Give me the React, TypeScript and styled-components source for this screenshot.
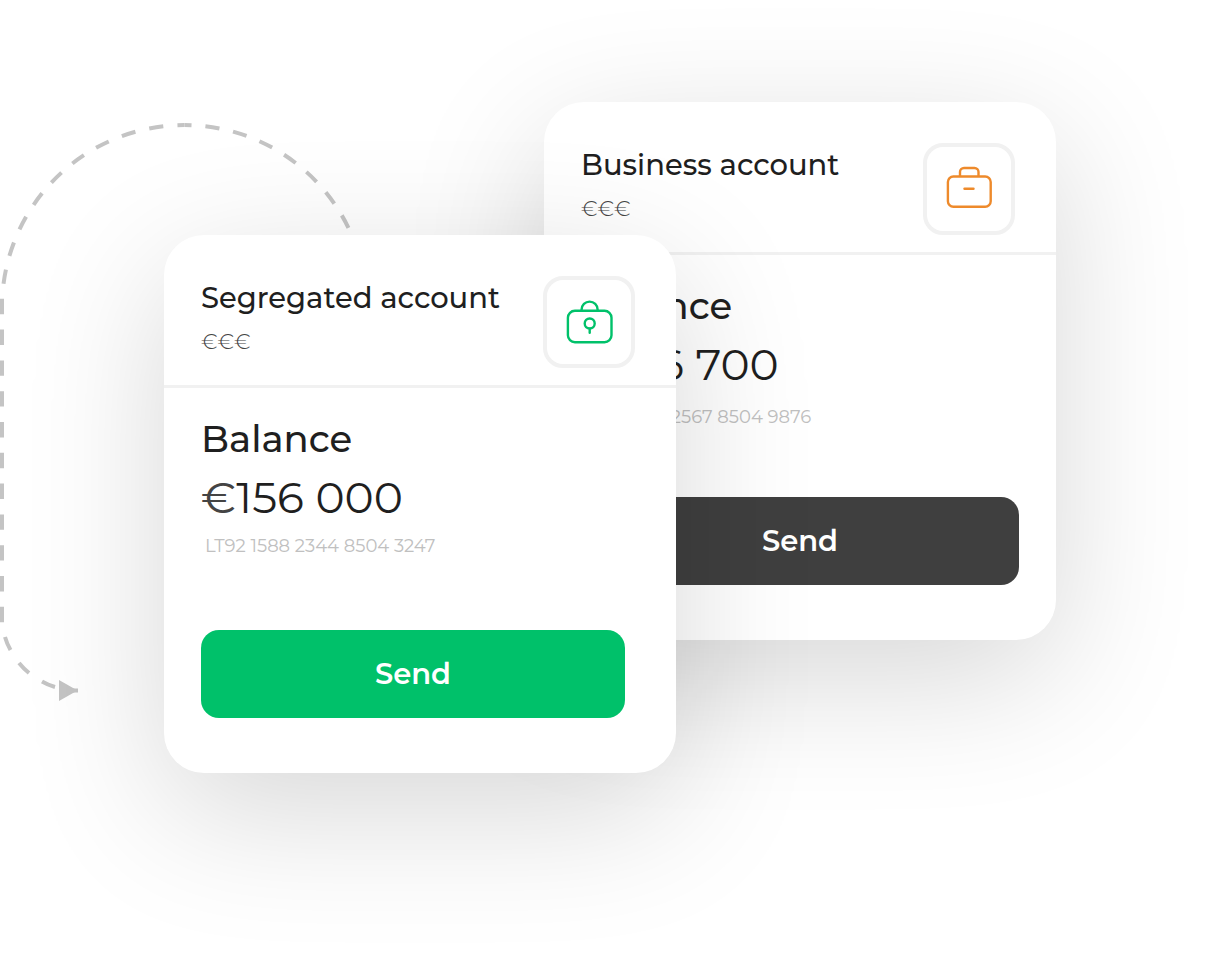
import React from "react";
import styled, { createGlobalStyle } from "styled-components";

const GlobalStyle = createGlobalStyle`
  *, *::before, *::after { box-sizing: border-box; }
  body {
    margin: 0;
    background: #ffffff;
    font-family: Montserrat, Inter, sans-serif;
    color: #1f1f1f;
  }
  h2, h3, p { margin: 0; }
`;

const Scene = styled.main`
  position: relative;
  min-height: 100vh;
  overflow: hidden;
  padding: 102px 154px 205px 164px;
`;

const Trail = styled.svg`
  position: absolute;
  left: 0;
  top: 0;
  fill: none;
  stroke: #c4c4c4;
  stroke-width: 4;
`;

const Stack = styled.div`
  position: relative;
  display: grid;
  grid-template-columns: 380fr 132fr 380fr;
  grid-template-rows: 133px 405px 133px;
`;

const Card = styled.section<{ $front?: boolean }>`
  grid-column: ${(p) => (p.$front ? "1 / 3" : "2 / 4")};
  grid-row: ${(p) => (p.$front ? "2 / 4" : "1 / 3")};
  z-index: ${(p) => (p.$front ? 1 : 0)};
  min-width: 0;
  border-radius: 40px;
  background: #ffffff;
  box-shadow: 0 38px 140px rgba(0, 0, 0, 0.16);
`;

const CardHeader = styled.header`
  display: flex;
  justify-content: space-between;
  padding: 41px 41px 17px 37px;
  border-bottom: 3px solid #f1f1f1;
`;

const Title = styled.h2`
  font-size: 29px;
  line-height: 44px;
  font-weight: 500;
  white-space: nowrap;
`;

const Currencies = styled.p`
  font-size: 21px;
  line-height: 44px;
  font-weight: 300;
  color: #444444;
`;

const IconTile = styled.div`
  display: grid;
  place-items: center;
  flex: none;
  width: 92px;
  height: 92px;
  border: 4px solid #f1f1f1;
  border-radius: 20px;
  background: #ffffff;
`;

const Icon = styled.svg<{ $color: string }>`
  display: block;
  fill: none;
  stroke: ${(p) => p.$color};
  stroke-width: 2.4;
`;

const CardBody = styled.div<{ $front?: boolean }>`
  padding: 22px ${(p) => (p.$front ? 51 : 37)}px 55px 37px;
`;

const Label = styled.h3`
  font-size: 37px;
  line-height: 58px;
  font-weight: 500;
`;

const Amount = styled.p`
  font-size: 44px;
  line-height: 58px;
  font-weight: 400;
  white-space: nowrap;
`;

const Euro = styled.span`
  color: #444444;
`;

const Iban = styled.p<{ $front?: boolean }>`
  height: 48px;
  padding-left: ${(p) => (p.$front ? 4 : 0)}px;
  font-size: 18px;
  line-height: ${(p) => (p.$front ? 40 : 48)}px;
  font-weight: 400;
  color: #c0c0c0;
  white-space: nowrap;
`;

const SendButton = styled.button<{ $color: string }>`
  display: block;
  width: 100%;
  height: 88px;
  margin-top: 56px;
  padding: 0 0 2px;
  border: 0;
  border-radius: 18px;
  background: ${(p) => p.$color};
  color: #ffffff;
  font-family: inherit;
  font-size: 29px;
  font-weight: 600;
  cursor: pointer;
`;

const Briefcase = () => (
  <Icon $color="#ee8a2b" width="50" height="50" viewBox="0 0 50 50" aria-hidden="true">
    <rect x="3.9" y="12.5" width="42.800" height="30.2" rx="5.5" />
    <path d="M16 12.5V8a4 4 0 0 1 4-4h10.500a4 4 0 0 1 4 4v4.500" />
    <path d="M20.500 24.800h9" strokeLinecap="round" />
  </Icon>
);

const LockedCase = () => (
  <Icon $color="#00c16a" width="50" height="50" viewBox="0 0 50 50" aria-hidden="true">
    <rect x="3.900" y="13.800" width="43.600" height="31.400" rx="7" />
    <path d="M17.600 13.500v-.9a8 8 0 0 1 16 0v.9" />
    <circle cx="25.700" cy="26.500" r="5" />
    <path d="M25.700 31.700V35.800" strokeLinecap="round" />
  </Icon>
);

type AccountProps = {
  title: string;
  amount: string;
  iban: string;
  color: string;
  icon: React.ReactNode;
  front?: boolean;
};

const AccountCard = ({ title, amount, iban, color, icon, front }: AccountProps) => (
  <Card $front={front} aria-label={title}>
    <CardHeader>
      <div>
        <Title>{title}</Title>
        <Currencies>€€€</Currencies>
      </div>
      <IconTile>{icon}</IconTile>
    </CardHeader>
    <CardBody $front={front}>
      <Label>Balance</Label>
      <Amount>
        <Euro>€</Euro>
        {amount}
      </Amount>
      <Iban $front={front}>{iban}</Iban>
      <SendButton type="button" $color={color}>
        Send
      </SendButton>
    </CardBody>
  </Card>
);

export default function App() {
  return (
    <>
      <GlobalStyle />
      <Scene>
        <Trail width="360" height="710" viewBox="0 0 360 710" aria-hidden="true">
          <path
            d="M184.500 125A182.500 182.500 0 0 0 3.300 285.500"
            strokeDasharray="14.2 14.2"
            strokeDashoffset="7.1"
          />
          <path
            d="M184.500 125A182.500 182.500 0 0 1 349 229"
            strokeDasharray="14.2 13.9"
            strokeDashoffset="7.1"
          />
          <path d="M2 298.800V623" strokeDasharray="15.400 15.400" />
          <path d="M5 637q2 7 5.500 13M19 663q4.500 5.500 10 10M42 681.500q6 3.500 13 5.500M70 690.500h8" />
          <path d="M59 680v21l18.500-10.500z" fill="#c4c4c4" stroke="none" />
        </Trail>
        <Stack>
          <AccountCard
            title="Business account"
            amount="156 700"
            iban="LT92 1588 2567 8504 9876"
            color="#3f3f3f"
            icon={<Briefcase />}
          />
          <AccountCard
            front
            title="Segregated account"
            amount="156 000"
            iban="LT92 1588 2344 8504 3247"
            color="#00c16a"
            icon={<LockedCase />}
          />
        </Stack>
      </Scene>
    </>
  );
}
